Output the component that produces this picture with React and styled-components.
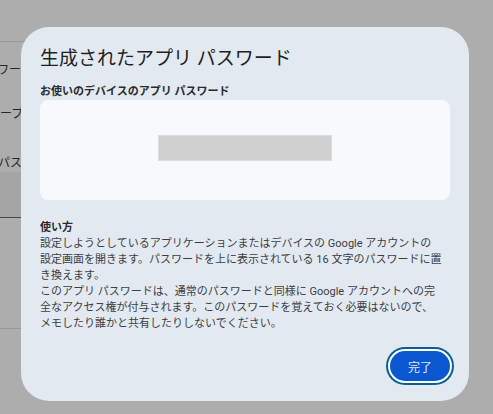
import React from "react";
import styled, { createGlobalStyle } from "styled-components";

const Global = createGlobalStyle`
  html, body { margin: 0; padding: 0; background: #ffffff; }
  body { font-family: Roboto, "Noto Sans CJK JP", sans-serif; }
`;

const Page = styled.div`
  width: 300px;
  display: flex;
  flex-direction: column;
  font-size: 12px;
  color: #3a3a3a;
`;

const Header = styled.div`
  height: 41px;
  border-bottom: 1px solid #e0e0e0;
`;

const BgRow = styled.div`
  height: ${(p) => p.$h}px;
  display: flex;
  align-items: center;
  white-space: nowrap;
  text-indent: ${(p) => p.$indent}px;
`;

const BgLabel = styled.div`
  margin-top: 25px;
  line-height: 16px;
  white-space: nowrap;
  text-indent: -2px;
`;

const BgField = styled.div`
  margin-top: 1px;
  height: 45px;
  background: #f3f3f3;
  border-bottom: 1px solid #6a6a6a;
`;

const BgDivider = styled.div`
  margin-top: 110px;
  border-top: 1px solid #e0e0e0;
`;

const Overlay = styled.div`
  position: fixed;
  inset: 0;
  background: rgba(0, 0, 0, 0.32);
  display: flex;
  align-items: flex-start;
  justify-content: flex-start;
  padding: 27px 0 0 21px;
`;

const Dialog = styled.div`
  width: 448px;
  height: 374px;
  box-sizing: border-box;
  background: #e3e9f1;
  border-radius: 28px;
  padding: 18px 19px 20px;
  display: flex;
  flex-direction: column;
  color: #1f1f1f;
`;

const Title = styled.h1`
  margin: 0;
  font-size: 19px;
  line-height: 28px;
  font-weight: 400;
  color: #1f1f1f;
  white-space: nowrap;
`;

const Subtitle = styled.div`
  margin-top: 11px;
  font-size: 11px;
  line-height: 16px;
  font-weight: 700;
  color: #2b2b2b;
`;

const PasswordBox = styled.div`
  height: 100px;
  background: #f7f9fc;
  border-radius: 8px;
  display: flex;
  align-items: center;
  justify-content: center;
`;

const Masked = styled.div`
  width: 172px;
  height: 24px;
  margin-top: -4px;
  background: #d0d0d0;
  border: 1px solid #dcdcdc;
`;

const Help = styled.div`
  margin-top: 20px;
  font-size: 11px;
  line-height: 16px;
  color: #3c3e41;
  white-space: nowrap;
`;

const HelpHeading = styled.div`
  font-weight: 700;
  color: #2b2b2b;
`;

const Actions = styled.div`
  margin-top: auto;
  display: flex;
  justify-content: flex-end;
`;

const PrimaryButton = styled.button`
  width: 60px;
  height: 30px;
  border: none;
  border-radius: 15px;
  background: #0b57d0;
  color: #e3ebfc;
  font-family: Roboto, "Noto Sans CJK JP", sans-serif;
  font-size: 12px;
  padding: 0;
  box-shadow: 0 0 0 2px #ffffff, 0 0 0 4px #07618f;
  cursor: pointer;
`;

export default function App() {
  return (
    <>
      <Global />
      <Page>
        <Header />
        <BgRow $h={52} $indent={-27}>パスワード</BgRow>
        <BgRow $h={36} $indent={-24}>グループ</BgRow>
        <BgLabel>パスワード</BgLabel>
        <BgField />
        <BgDivider />
      </Page>
      <Overlay>
        <Dialog role="dialog">
          <Title>生成されたアプリ パスワード</Title>
          <Subtitle>お使いのデバイスのアプリ パスワード</Subtitle>
          <PasswordBox>
            <Masked />
          </PasswordBox>
          <Help>
            <HelpHeading>使い方</HelpHeading>
            設定しようとしているアプリケーションまたはデバイスの Google アカウントの
            <br />
            設定画面を開きます。パスワードを上に表示されている 16 文字のパスワードに置
            <br />
            き換えます。
            <br />
            このアプリ パスワードは、通常のパスワードと同様に Google アカウントへの完
            <br />
            全なアクセス権が付与されます。このパスワードを覚えておく必要はないので、
            <br />
            メモしたり誰かと共有したりしないでください。
          </Help>
          <Actions>
            <PrimaryButton>完了</PrimaryButton>
          </Actions>
        </Dialog>
      </Overlay>
    </>
  );
}
